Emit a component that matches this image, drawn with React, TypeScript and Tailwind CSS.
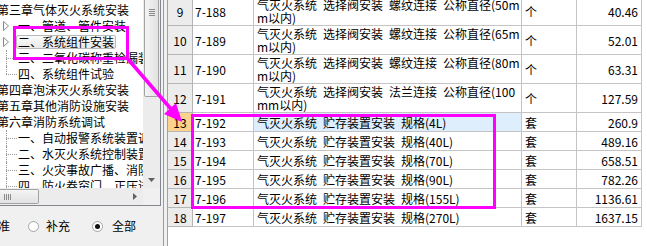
import React from 'react';

type Item = { text: string; level: 0 | 1; kind?: 'tri' | 'mid' | 'last'; sel?: boolean };

const tree: Item[] = [
  { text: '第三章气体灭火系统安装', level: 0 },
  { text: '一、管道、管件安装', level: 1, kind: 'tri' },
  { text: '二、系统组件安装', level: 1, kind: 'tri', sel: true },
  { text: '三、二氧化碳称重检漏装置安装', level: 1, kind: 'mid' },
  { text: '四、系统组件试验', level: 1, kind: 'last' },
  { text: '第四章泡沫灭火系统安装', level: 0 },
  { text: '第五章其他消防设施安装', level: 0 },
  { text: '第六章消防系统调试', level: 0 },
  { text: '一、自动报警系统装置调试', level: 1, kind: 'mid' },
  { text: '二、水灭火系统控制装置调试', level: 1, kind: 'mid' },
  { text: '三、火灾事故广播、消防通讯、消防电梯系统装置调试', level: 1, kind: 'mid' },
  { text: '四、防火卷帘门、正压送风阀、排烟阀、防火阀控制系统装置调试', level: 1, kind: 'mid' },
];

type Row = { n: number; code: string; name: string[]; unit: string; price: string; sel?: boolean };

const S = '\u2002';
const rows: Row[] = [
  { n: 9, code: '7-188', name: [`气灭火系统${S}选择阀安装${S}螺纹连接${S}公称直径(50m`, 'm以内)'], unit: '个', price: '40.46' },
  { n: 10, code: '7-189', name: [`气灭火系统${S}选择阀安装${S}螺纹连接${S}公称直径(65m`, 'm以内)'], unit: '个', price: '52.01' },
  { n: 11, code: '7-190', name: [`气灭火系统${S}选择阀安装${S}螺纹连接${S}公称直径(80m`, 'm以内)'], unit: '个', price: '63.31' },
  { n: 12, code: '7-191', name: [`气灭火系统${S}选择阀安装${S}法兰连接${S}公称直径(100`, 'mm以内)'], unit: '个', price: '127.59' },
  { n: 13, code: '7-192', name: [`气灭火系统${S}贮存装置安装${S}规格(4L)`], unit: '套', price: '260.9', sel: true },
  { n: 14, code: '7-193', name: [`气灭火系统${S}贮存装置安装${S}规格(40L)`], unit: '套', price: '489.16' },
  { n: 15, code: '7-194', name: [`气灭火系统${S}贮存装置安装${S}规格(70L)`], unit: '套', price: '658.51' },
  { n: 16, code: '7-195', name: [`气灭火系统${S}贮存装置安装${S}规格(90L)`], unit: '套', price: '782.26' },
  { n: 17, code: '7-196', name: [`气灭火系统${S}贮存装置安装${S}规格(155L)`], unit: '套', price: '1136.61' },
  { n: 18, code: '7-197', name: [`气灭火系统${S}贮存装置安装${S}规格(270L)`], unit: '套', price: '1637.15' },
];

function Tri() {
  return (
    <svg width="6" height="10" viewBox="0 0 6 10" className="ml-[3px]">
      <path d="M0.5 0.5 L5.5 5 L0.5 9.5 Z" fill="white" stroke="#8a8a8a" strokeWidth="1" />
    </svg>
  );
}

function TreeRow({ it }: { it: Item }) {
  if (it.level === 0) {
    return (
      <div className="h-[16px] flex items-center whitespace-nowrap">
        <span className="-ml-[3px]">{it.text}</span>
      </div>
    );
  }
  return (
    <div className="h-[16px] flex items-center whitespace-nowrap">
      <div className="w-[18px] h-full shrink-0 relative flex items-center">
        {it.kind === 'tri' && <Tri />}
        {it.kind === 'mid' && (
          <>
            <span className="absolute left-[6px] top-0 bottom-0 border-l border-dotted border-[#9a9a9a]" />
            <span className="absolute left-[6px] top-[8px] w-[11px] border-t border-dotted border-[#9a9a9a]" />
          </>
        )}
        {it.kind === 'last' && (
          <>
            <span className="absolute left-[6px] top-0 h-[8px] border-l border-dotted border-[#9a9a9a]" />
            <span className="absolute left-[6px] top-[8px] w-[11px] border-t border-dotted border-[#9a9a9a]" />
          </>
        )}
      </div>
      {it.sel ? (
        <span className="-ml-[2px] px-[1px] h-[14px] flex items-center border border-[#b9b9b9] rounded-[2px] bg-gradient-to-b from-[#fbfbfb] to-[#e9e9e9]">
          {it.text}
        </span>
      ) : (
        <span>{it.text}</span>
      )}
    </div>
  );
}

function Radio({ checked }: { checked?: boolean }) {
  return (
    <span className="w-[11px] h-[11px] rounded-full border border-[#a4a4a4] bg-white flex items-center justify-center shrink-0">
      {checked && <span className="w-[5px] h-[5px] rounded-full bg-[#111]" />}
    </span>
  );
}

function GridRow({ r }: { r: Row }) {
  const two = r.name.length > 1;
  return (
    <div className={two ? 'flex h-[29px] leading-[13px]' : 'flex h-[19px] leading-[13px]'}>
      <div
        className={
          r.sel
            ? 'w-[25px] shrink-0 border-r border-b border-[#b5b5b5] bg-[#fcd28e] flex items-center justify-center'
            : 'w-[25px] shrink-0 border-r border-b border-[#b5b5b5] bg-[#ececec] flex items-center justify-center'
        }
      >
        {r.n}
      </div>
      <div className="w-[61px] shrink-0 border-r border-b border-[#c4c4c4] flex items-center pl-[2px]">{r.code}</div>
      <div
        className={
          r.sel
            ? 'w-[268px] shrink-0 border-r border-b border-[#c4c4c4] bg-[#deeefd] flex flex-col justify-center pl-[3px] whitespace-nowrap overflow-hidden'
            : 'w-[268px] shrink-0 border-r border-b border-[#c4c4c4] flex flex-col justify-center pl-[3px] whitespace-nowrap overflow-hidden'
        }
      >
        {r.name.map((l, i) => (
          <span key={i}>{l}</span>
        ))}
      </div>
      <div className="w-[55px] shrink-0 border-r border-b border-[#c4c4c4] flex items-center pl-[3px]">{r.unit}</div>
      <div className="w-[65px] shrink-0 border-r border-b border-[#c4c4c4] flex items-center justify-end pr-[3px]">{r.price}</div>
    </div>
  );
}

export default function App() {
  return (
    <div className="relative w-[647px] h-[246px] overflow-hidden flex bg-white text-[12px] text-black font-['Noto_Sans_CJK_SC',sans-serif]">
      {/* Left panel */}
      <div className="w-[161px] shrink-0 flex flex-col bg-[#f0f0f0]">
        <div className="h-[206px] flex flex-col border-r border-b border-[#828790]">
          <div className="h-[188px] flex">
            <div className="w-[143px] overflow-hidden bg-white pt-[2px] leading-[14px]">
              {tree.map((it, i) => (
                <TreeRow key={i} it={it} />
              ))}
            </div>
            {/* vertical scrollbar */}
            <div className="w-[17px] flex flex-col bg-[#ececec]">
              <div className="h-[97px] mx-[1px] border border-t-0 border-[#a3a3a3] rounded-b-[2px] bg-gradient-to-r from-[#f4f4f4] to-[#e2e2e2] flex flex-col items-center pt-[9px] gap-[1px]">
                <span className="w-[6px] h-px bg-[#8a8a8a]" />
                <span className="w-[6px] h-px bg-[#8a8a8a]" />
                <span className="w-[6px] h-px bg-[#8a8a8a]" />
                <span className="w-[6px] h-px bg-[#8a8a8a]" />
              </div>
              <div className="flex-1" />
              <div className="h-[17px] flex items-center justify-center">
                <svg width="7" height="4" viewBox="0 0 7 4">
                  <path d="M0 0 L7 0 L3.5 4 Z" fill="#606060" />
                </svg>
              </div>
            </div>
          </div>
          <div className="flex-1 flex">
            {/* horizontal scrollbar */}
            <div className="w-[143px] flex bg-[#ececec]">
              <div className="w-[39px] my-[1px] border border-l-0 border-[#a3a3a3] rounded-r-[2px] bg-gradient-to-b from-[#f4f4f4] to-[#e2e2e2] flex items-center gap-[1px] pl-[4px]">
                <span className="w-px h-[6px] bg-[#8a8a8a]" />
                <span className="w-px h-[6px] bg-[#8a8a8a]" />
                <span className="w-px h-[6px] bg-[#8a8a8a]" />
                <span className="w-px h-[6px] bg-[#8a8a8a]" />
              </div>
              <div className="flex-1" />
              <div className="w-[17px] flex items-center justify-center">
                <svg width="4" height="7" viewBox="0 0 4 7">
                  <path d="M0 0 L4 3.5 L0 7 Z" fill="#606060" />
                </svg>
              </div>
            </div>
            <div className="w-[17px] bg-[#f0f0f0]" />
          </div>
        </div>
        <div className="flex-1 flex items-center -ml-[14px] whitespace-nowrap leading-[14px]">
          <span>标准</span>
          <span className="ml-[18px]">
            <Radio />
          </span>
          <span className="ml-[7px]">补充</span>
          <span className="ml-[22px]">
            <Radio checked />
          </span>
          <span className="ml-[9px]">全部</span>
        </div>
      </div>

      {/* splitter */}
      <div className="w-[6px] shrink-0 bg-[#f0f0f0] flex">
        <div className="ml-[2px] w-px h-full bg-[#9a9a9a]" />
      </div>

      {/* Grid */}
      <div className="flex-1 border-l border-[#a0a0a0] bg-white overflow-hidden">
        <div className="-mt-[3px] flex flex-col">
          {rows.map((r) => (
            <GridRow key={r.n} r={r} />
          ))}
        </div>
      </div>

      {/* Annotation overlay */}
      <svg className="absolute left-0 top-0 pointer-events-none" width="647" height="246">
        <rect x="14.5" y="27.5" width="113" height="31" fill="none" stroke="#ff00ff" strokeWidth="3" />
        <rect x="192.5" y="115.5" width="302" height="92" fill="none" stroke="#ff00ff" strokeWidth="3" />
        <line x1="127" y1="58" x2="171" y2="109" stroke="#ff00ff" strokeWidth="3.5" />
        <polygon points="182,122 164,114 176,103" fill="#ff00ff" />
      </svg>
    </div>
  );
}
